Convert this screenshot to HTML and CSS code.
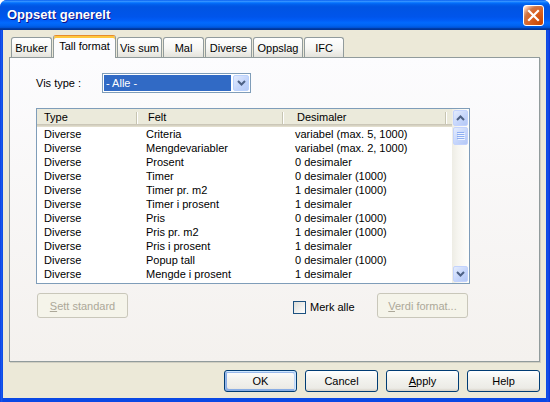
FILE: index.html
```html
<!DOCTYPE html>
<html lang="no">
<head>
<meta charset="utf-8">
<title>Oppsett generelt</title>
<link rel="stylesheet" href="styles.css">
</head>
<body>
<div class="window">
  <div class="titlebar">
    <span class="title">Oppsett generelt</span>
    <button class="close" type="button" aria-label="Lukk">
      <svg width="13" height="13" viewBox="0 0 13 13"><path d="M2 2 L11 11 M11 2 L2 11" stroke="#fff" stroke-width="2.2" stroke-linecap="square" fill="none"/></svg>
    </button>
  </div>
  <div class="client">
    <div class="tabs">
      <div class="tab w-bruker">Bruker</div>
      <div class="tab active w-tall">Tall format</div>
      <div class="tab w-vissum">Vis sum</div>
      <div class="tab w-mal">Mal</div>
      <div class="tab w-diverse">Diverse</div>
      <div class="tab w-oppslag">Oppslag</div>
      <div class="tab w-ifc">IFC</div>
    </div>
    <div class="panel">
      <div class="filter-row">
        <span class="filter-label">Vis type :</span>
        <div class="combo">
          <span class="combo-value">- Alle -</span>
          <span class="combo-btn"><svg width="9" height="6" viewBox="0 0 9 6"><path d="M1 1 L4.5 4.5 L8 1" stroke="#4d6185" stroke-width="2" fill="none"/></svg></span>
        </div>
      </div>
      <div class="list">
        <div class="list-main">
          <div class="list-header">
            <div class="hcol c1">Type</div>
            <div class="hcol c2">Felt</div>
            <div class="hcol c3">Desimaler</div>
            <div class="hcol c4"></div>
          </div>
          <div class="row"><span class="cell c1">Diverse</span><span class="cell c2">Criteria</span><span class="cell c3">variabel (max. 5, 1000)</span></div>
          <div class="row"><span class="cell c1">Diverse</span><span class="cell c2">Mengdevariabler</span><span class="cell c3">variabel (max. 2, 1000)</span></div>
          <div class="row"><span class="cell c1">Diverse</span><span class="cell c2">Prosent</span><span class="cell c3">0 desimaler</span></div>
          <div class="row"><span class="cell c1">Diverse</span><span class="cell c2">Timer</span><span class="cell c3">0 desimaler (1000)</span></div>
          <div class="row"><span class="cell c1">Diverse</span><span class="cell c2">Timer pr. m2</span><span class="cell c3">1 desimaler (1000)</span></div>
          <div class="row"><span class="cell c1">Diverse</span><span class="cell c2">Timer i prosent</span><span class="cell c3">1 desimaler</span></div>
          <div class="row"><span class="cell c1">Diverse</span><span class="cell c2">Pris</span><span class="cell c3">0 desimaler (1000)</span></div>
          <div class="row"><span class="cell c1">Diverse</span><span class="cell c2">Pris pr. m2</span><span class="cell c3">1 desimaler (1000)</span></div>
          <div class="row"><span class="cell c1">Diverse</span><span class="cell c2">Pris i prosent</span><span class="cell c3">1 desimaler</span></div>
          <div class="row"><span class="cell c1">Diverse</span><span class="cell c2">Popup tall</span><span class="cell c3">0 desimaler (1000)</span></div>
          <div class="row"><span class="cell c1">Diverse</span><span class="cell c2">Mengde i prosent</span><span class="cell c3">1 desimaler</span></div>
        </div>
        <div class="vscroll">
          <span class="sb-btn"><svg width="9" height="6" viewBox="0 0 9 6"><path d="M1 5 L4.5 1.5 L8 5" stroke="#4d6185" stroke-width="2" fill="none"/></svg></span>
          <span class="sb-thumb"><svg width="8" height="8" viewBox="0 0 8 8"><path d="M0 0.5 H7 M0 2.5 H7 M0 4.5 H7 M0 6.5 H7" stroke="#8eaef2" stroke-width="1"/><path d="M1 1.5 H8 M1 3.5 H8 M1 5.5 H8 M1 7.5 H8" stroke="#eef4fe" stroke-width="1"/></svg></span>
          <span class="sb-track"></span>
          <span class="sb-btn"><svg width="9" height="6" viewBox="0 0 9 6"><path d="M1 1 L4.5 4.5 L8 1" stroke="#4d6185" stroke-width="2" fill="none"/></svg></span>
        </div>
      </div>
      <div class="actions">
        <button class="btn btn-panel" type="button" disabled><span><u>S</u>ett standard</span></button>
        <span class="check-group">
          <span class="checkbox"></span>
          <span class="check-label">Merk alle</span>
        </span>
        <button class="btn btn-panel btn-verdi" type="button" disabled><span><u>V</u>erdi format...</span></button>
      </div>
    </div>
    <div class="dialog-buttons">
      <button class="btn btn-dlg default" type="button">OK</button>
      <button class="btn btn-dlg" type="button">Cancel</button>
      <button class="btn btn-dlg" type="button"><span><u>A</u>pply</span></button>
      <button class="btn btn-dlg" type="button">Help</button>
    </div>
  </div>
</div>
</body>
</html>
```

FILE: styles.css
```css
* { box-sizing: border-box; }

body {
  margin: 0;
  font-family: "Liberation Sans", Arial, sans-serif;
  font-size: 11px;
  color: #000;
  background: #fff;
}

.window {
  width: 550px;
  height: 402px;
  display: flex;
  flex-direction: column;
  background: linear-gradient(to right, #0831d9 0, #1a5cf0 1px, #0a48e4 3px, #0a48e4 546px, #1650e8 548px, #0831d9 550px);
  border-radius: 7px 7px 0 0;
  overflow: hidden;
}

.titlebar {
  flex: none;
  height: 30px;
  display: flex;
  align-items: center;
  padding: 0 6px 0 7px;
  background: linear-gradient(to bottom, #0058ee 0%, #3a93ff 4%, #288eff 6%, #127dff 8%, #036ffc 10%, #0262ee 14%, #0057e5 20%, #0054e3 24%, #0055eb 56%, #005bf5 66%, #026afe 76%, #0062ef 86%, #0052d6 92%, #0040ab 94%, #003092 100%);
}

.title {
  flex: 1;
  color: #fff;
  font-weight: bold;
  font-size: 13px;
  text-shadow: 1px 1px 0 #0f1089;
  padding-bottom: 1px;
}

.close {
  width: 21px;
  height: 21px;
  padding: 0;
  border: 1px solid #fff;
  border-radius: 3px;
  background: radial-gradient(circle at 90% 90%, #cc4600 0%, #dc6527 55%, #cd7546 70%, #ffccb2 90%, #ffffff 100%);
  display: flex;
  align-items: center;
  justify-content: center;
  margin-top: 1px;
}

.client {
  flex: 1;
  margin: 0 4px 4px 3px;
  background: #ece9d8;
  display: flex;
  flex-direction: column;
  padding: 5px 6px 0 6px;
}

.tabs {
  display: flex;
  align-items: flex-end;
  gap: 1px;
  height: 22px;
  padding-left: 2px;
}

.tab {
  height: 20px;
  border: 1px solid #919b9c;
  border-bottom: none;
  border-radius: 3px 3px 0 0;
  background: linear-gradient(#ffffff, #f6f6f3 55%, #e4e3dc);
  display: flex;
  align-items: center;
  justify-content: center;
  padding-top: 1px;
  white-space: nowrap;
}

.tab.active {
  height: 23px;
  margin-bottom: -1px;
  background: #fcfcfe;
  border-top-color: #e68b2c;
  box-shadow: inset 0 2px 0 #ffc73c;
  position: relative;
  z-index: 1;
  padding-top: 0;
  padding-bottom: 2px;
}

.w-bruker { width: 41px; }
.w-tall { width: 63px; }
.w-vissum { width: 45px; }
.w-mal { width: 41px; }
.w-diverse { width: 47px; }
.w-oppslag { width: 50px; }
.w-ifc { width: 40px; }

.panel {
  height: 305px;
  border: 1px solid #919b9c;
  background: linear-gradient(#fcfcfe, #f4f1ee);
  box-shadow: 1px 1px 0 #d1cfc2;
  padding: 15px 0 0 26px;
  display: flex;
  flex-direction: column;
}

.filter-row {
  display: flex;
  align-items: center;
  height: 20px;
}

.filter-label {
  width: 66px;
}

.combo {
  width: 149px;
  height: 20px;
  border: 1px solid #7f9db9;
  background: #fff;
  display: flex;
  padding: 1px;
  gap: 2px;
}

.combo-value {
  width: 127px;
  background: #316ac5;
  color: #fff;
  padding-left: 2px;
  display: flex;
  align-items: center;
}

.combo-btn {
  width: 16px;
  border: 1px solid #bad1fc;
  border-radius: 2px;
  background: linear-gradient(135deg, #e3ebfd, #c2d4fb 60%, #b6cbf8);
  display: flex;
  align-items: center;
  justify-content: center;
}

.list {
  margin-top: 15px;
  width: 434px;
  height: 176px;
  border: 1px solid #7f9db9;
  background: #fff;
  display: flex;
}

.list-main {
  flex: 1;
  overflow: hidden;
}

.list-header {
  display: flex;
  height: 18px;
  background: #ebeadb;
  box-shadow: inset 0 -1px 0 #e2decd, inset 0 -2px 0 #d6d2c2, inset 0 -3px 0 #cbc7b8;
}

.hcol {
  display: flex;
  align-items: center;
  padding-bottom: 2px;
  background-image: linear-gradient(#c7c5b2, #c7c5b2), linear-gradient(#fff, #fff);
  background-repeat: no-repeat;
  background-size: 1px 12px, 1px 12px;
  background-position: right 1px top 3px, right 0 top 3px;
}

.hcol.c1 { width: 101px; padding-left: 7px; }
.hcol.c2 { width: 146px; padding-left: 10px; }
.hcol.c3 { width: 163px; padding-left: 13px; }
.hcol.c4 { flex: 1; background-image: none; }

.row {
  display: flex;
  align-items: center;
  height: 14px;
  white-space: nowrap;
}

.cell.c1 { width: 101px; padding-left: 7px; }
.cell.c2 { width: 146px; padding-left: 8px; }
.cell.c3 { width: 163px; padding-left: 11px; }

.vscroll {
  width: 17px;
  display: flex;
  flex-direction: column;
  padding: 1px 1px 1px 1px;
  background: linear-gradient(to right, #eeede5, #f7f6f1 40%, #fefefb);
}

.sb-btn,
.sb-thumb {
  flex: none;
  border: 1px solid #c3d3fd;
  border-radius: 2px;
  background: linear-gradient(135deg, #e4ecfd, #c6d6fb 55%, #b4c8f6);
  display: flex;
  align-items: center;
  justify-content: center;
}

.sb-btn { height: 16px; }

.sb-thumb {
  height: 18px;
  margin-top: 1px;
}

.sb-track { flex: 1; }

.actions {
  margin-top: 9px;
  display: flex;
  align-items: center;
  width: 434px;
  height: 25px;
}

.btn {
  font: inherit;
  color: #000;
  border: 1px solid #003c74;
  border-radius: 3px;
  background: linear-gradient(#ffffff, #f3f3ef 40%, #ecebe6 86%, #d6d0c5);
  display: flex;
  align-items: center;
  justify-content: center;
  padding: 0;
}

.btn:disabled {
  border-color: #c9c7ba;
  background: #f5f4ea;
  color: #aca899;
}

.btn-panel {
  width: 91px;
  height: 25px;
  margin-left: 1px;
}

.btn-verdi {
  margin-left: auto;
  margin-right: 2px;
}

.check-group {
  display: flex;
  align-items: center;
  gap: 4px;
  margin-left: 165px;
  padding-top: 3px;
}

.checkbox {
  width: 13px;
  height: 13px;
  border: 1px solid #1c5180;
  background: linear-gradient(135deg, #dcdcd7, #ffffff);
}

.dialog-buttons {
  display: flex;
  justify-content: flex-end;
  gap: 8px;
  margin-top: 8px;
}

.btn-dlg {
  width: 73px;
  height: 22px;
}

.btn-dlg.default {
  box-shadow: inset -1px 1px 0 #cee7ff, inset 1px 2px 0 #98b8ea, inset -2px 2px 0 #bcd4f6, inset 1px -1px 0 #89ade4, inset 2px -2px 0 #89ade4;
}
```
